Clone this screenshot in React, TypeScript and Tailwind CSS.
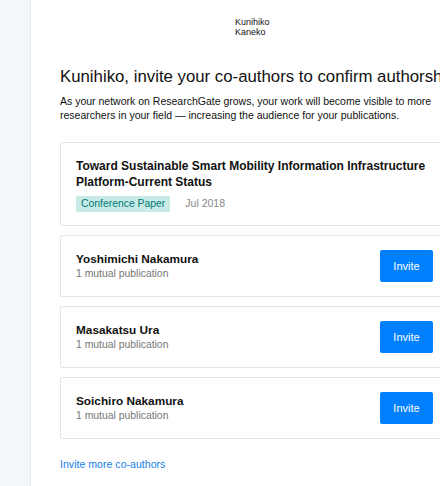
const coAuthors = [
  { name: 'Yoshimichi Nakamura', mutual: '1 mutual publication' },
  { name: 'Masakatsu Ura', mutual: '1 mutual publication' },
  { name: 'Soichiro Nakamura', mutual: '1 mutual publication' },
];

function AuthorCard({ name, mutual }: { name: string; mutual: string }) {
  return (
    <div className="flex h-[62px] items-center justify-between rounded-[2px] border border-[#e4e4e4] bg-white pl-[15px] pr-[16px]">
      <div className="flex flex-col">
        <span className="text-[11.8px] font-bold leading-[16px] text-[#111]">{name}</span>
        <span className="text-[10.4px] leading-[14px] text-[#777]">{mutual}</span>
      </div>
      <button className="h-[32px] w-[53px] rounded-[2px] bg-[#0080ff] text-[11px] text-white">
        Invite
      </button>
    </div>
  );
}

export default function App() {
  return (
    <div
      className="flex h-[486px] w-[440px] overflow-hidden bg-white"
      style={{ fontFamily: '"Liberation Sans", Arial, sans-serif' }}
    >
      <div className="w-[31px] shrink-0 border-r border-[#e6edf2] bg-[#f3f7fa]" />
      <div className="w-[420px] shrink-0 pl-[29px]">
        <div className="flex justify-start pl-[175px] pt-[17px]">
          <div className="text-[9px] leading-[10px] text-[#111]">
            Kunihiko
            <br />
            Kaneko
          </div>
        </div>
        <h1 className="mt-[28px] whitespace-nowrap text-[16.8px] leading-[24px] text-[#111]">
          Kunihiko, invite your co-authors to confirm authorship
        </h1>
        <p className="mt-[5px] w-[385px] text-[10.5px] leading-[14px] text-[#111]">
          As your network on ResearchGate grows, your work will become visible to more researchers in your field — increasing the audience for your publications.
        </p>
        <div className="mt-[20px] flex w-[390px] flex-col gap-[9px]">
          <div className="h-[84px] rounded-[2px] border border-[#e4e4e4] bg-white pl-[15px] pt-[15px]">
            <div className="text-[12px] font-bold leading-[16px] text-[#111]">
              Toward Sustainable Smart Mobility Information Infrastructure Platform-Current Status
            </div>
            <div className="mt-[6px] flex items-center gap-[15px]">
              <span className="rounded-[1px] bg-[#c8ebe5] px-[5px] text-[10.4px] leading-[16px] text-[#00787a]">
                Conference Paper
              </span>
              <span className="text-[10.5px] text-[#888]">Jul 2018</span>
            </div>
          </div>
          {coAuthors.map((a) => (
            <AuthorCard key={a.name} name={a.name} mutual={a.mutual} />
          ))}
        </div>
        <a className="mt-[18px] block text-[10.6px] leading-[14px] text-[#1a7fe8]">
          Invite more co-authors
        </a>
      </div>
    </div>
  );
}
